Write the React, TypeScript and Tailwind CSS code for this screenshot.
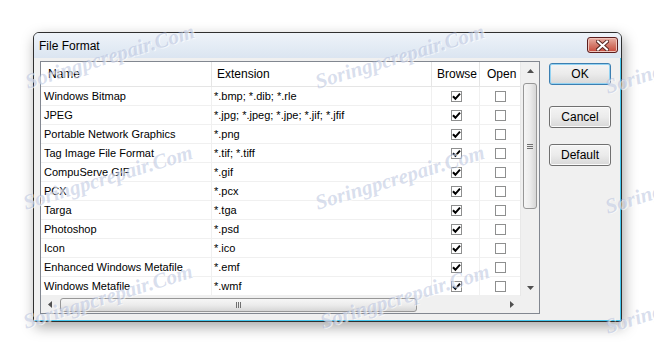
import React from 'react';

const rows: [string, string][] = [
  ['Windows Bitmap', '*.bmp; *.dib; *.rle'],
  ['JPEG', '*.jpg; *.jpeg; *.jpe; *.jif; *.jfif'],
  ['Portable Network Graphics', '*.png'],
  ['Tag Image File Format', '*.tif; *.tiff'],
  ['CompuServe GIF', '*.gif'],
  ['PCX', '*.pcx'],
  ['Targa', '*.tga'],
  ['Photoshop', '*.psd'],
  ['Icon', '*.ico'],
  ['Enhanced Windows Metafile', '*.emf'],
  ['Windows Metafile', '*.wmf'],
];

// watermark centres, drawn over the whole shot
const marks = [
  { x: 'left-[110px] top-[57px]' },
  { x: 'left-[400px] top-[57px]' },
  { x: 'left-[690px] top-[62px]' },
  { x: 'left-[108px] top-[178px]' },
  { x: 'left-[400px] top-[178px]' },
  { x: 'left-[690px] top-[182px]' },
  { x: 'left-[108px] top-[297px]' },
  { x: 'left-[405px] top-[297px]' },
  { x: 'left-[690px] top-[302px]' },
];

function Box({ checked }: { checked: boolean }) {
  return (
    <span className="w-[11px] h-[11px] border border-[#8e8f8f] bg-white flex items-center justify-center">
      {checked && (
        <svg width="9" height="9" viewBox="0 0 9 9">
          <path d="M1 4.2 L3.4 6.8 L8 1.6" fill="none" stroke="#000" strokeWidth="2" />
        </svg>
      )}
    </span>
  );
}

function Arrow({ dir }: { dir: 'up' | 'down' | 'left' | 'right' }) {
  const d = {
    up: 'M0 4 L3.5 0 L7 4 Z',
    down: 'M0 0 L7 0 L3.5 4 Z',
    left: 'M4 0 L4 7 L0 3.5 Z',
    right: 'M0 0 L4 3.5 L0 7 Z',
  }[dir];
  const vert = dir === 'up' || dir === 'down';
  return (
    <svg width={vert ? 7 : 4} height={vert ? 4 : 7} viewBox={vert ? '0 0 7 4' : '0 0 4 7'}>
      <path d={d} fill="#505050" />
    </svg>
  );
}

function Btn({ label, def, className }: { label: string; def?: boolean; className?: string }) {
  return (
    <div
      className={
        'h-[22px] w-[62px] rounded-[3px] flex items-center justify-center text-[12px] text-black bg-gradient-to-b from-[#f4f4f4] via-[#ebebeb] to-[#d8d8d8] ' +
        (def
          ? 'border border-[#3c7fb1] shadow-[inset_0_0_0_1px_#93d2f2] '
          : 'border border-[#707070] shadow-[inset_0_0_0_1px_#fbfbfb] ') +
        (className ?? '')
      }
    >
      {label}
    </div>
  );
}

export default function App() {
  return (
    <div className="w-[654px] h-[354px] bg-white pt-[32px] pl-[33px] relative overflow-hidden font-['Liberation_Sans',Arial,sans-serif] text-black">
      <div className="w-[589px] h-[290px] flex flex-col border border-[#2f2f2f] rounded-t-[6px] rounded-b-[1px] bg-[#dfe8f3] shadow-[2px_5px_14px_rgba(0,0,0,0.35)] overflow-hidden">
        {/* title bar */}
        <div className="h-[25px] flex justify-between bg-gradient-to-b from-[#eef3f9] to-[#dbe5f1]">
          <span className="pl-[5px] pt-[5px] text-[12px] leading-[16px]">File Format</span>
          <div className="mt-[4px] mr-[3px] w-[31px] h-[16px] rounded-[3px] border border-[#5c1e1e] bg-gradient-to-b from-[#e8b0a6] via-[#d47b6c] to-[#c7483a] flex items-center justify-center shadow-[inset_0_0_0_1px_#f0c4bb]">
            <svg width="13" height="11" viewBox="0 0 13 11">
              <path d="M2 1.5 L11 9.5 M11 1.5 L2 9.5" stroke="#5a2a25" strokeWidth="4" strokeLinecap="square" />
              <path d="M2 1.5 L11 9.5 M11 1.5 L2 9.5" stroke="#ffffff" strokeWidth="2" strokeLinecap="square" />
            </svg>
          </div>
        </div>

        {/* client */}
        <div className="flex-1 flex pl-[6px] pt-[3px] pb-[6px] pr-[8px] gap-[9px] bg-[#f0f0f0] border-r border-b border-[#43c6ee]">
          <div className="w-[500px] h-[253px] border border-[#828790] bg-white flex flex-col text-[11px]">
            <div className="flex flex-1 min-h-0">
              <div className="w-[479px] flex flex-col">
                <div className="h-[25px] flex border-b border-[#e5e5e5] text-[12px]">
                  <div className="w-[171px] pl-[7px] flex items-center border-r border-[#e5e5e5]">Name</div>
                  <div className="w-[220px] pl-[5px] flex items-center border-r border-[#e5e5e5]">Extension</div>
                  <div className="w-[48px] pl-[5px] flex items-center border-r border-[#e5e5e5]">Browse</div>
                  <div className="w-[40px] pl-[7px] flex items-center">Open</div>
                </div>
                {rows.map(([n, e]) => (
                  <div key={n} className="h-[19px] flex border-b border-[#f0f0f0]">
                    <div className="w-[171px] pl-[3px] flex items-center border-r border-[#f0f0f0] whitespace-nowrap">{n}</div>
                    <div className="w-[220px] pl-[2px] flex items-center border-r border-[#f0f0f0] whitespace-nowrap">{e}</div>
                    <div className="w-[48px] flex items-center justify-center border-r border-[#f0f0f0] pl-[2px]">
                      <Box checked />
                    </div>
                    <div className="w-[40px] flex items-center justify-center">
                      <Box checked={false} />
                    </div>
                  </div>
                ))}
              </div>
              {/* vertical scrollbar */}
              <div className="w-[19px] flex flex-col bg-[#f0f0f0] border-l border-[#e8e8e8]">
                <div className="h-[17px] flex items-center justify-center pt-[1px]">
                  <Arrow dir="up" />
                </div>
                <div className="flex-1 px-[2px] pt-[4px]">
                  <div className="h-[126px] rounded-[3px] border border-[#979797] bg-gradient-to-r from-[#f6f6f6] via-[#ececec] to-[#d6d6d6] flex items-center justify-center">
                    <div className="flex flex-col gap-[1px]">
                      <span className="w-[6px] h-[1px] bg-[#707070]" />
                      <span className="w-[6px] h-[1px] bg-[#707070]" />
                      <span className="w-[6px] h-[1px] bg-[#707070]" />
                    </div>
                  </div>
                </div>
                <div className="h-[17px] flex items-center justify-center">
                  <Arrow dir="down" />
                </div>
              </div>
            </div>
            {/* horizontal scrollbar */}
            <div className="h-[17px] flex bg-[#f0f0f0]">
              <div className="w-[479px] flex items-center">
                <div className="w-[17px] flex justify-center">
                  <Arrow dir="left" />
                </div>
                <div className="ml-[2px] w-[357px] h-[14px] rounded-[3px] border border-[#979797] bg-gradient-to-b from-[#f6f6f6] via-[#ececec] to-[#d6d6d6] flex items-center justify-center gap-[1px]">
                  <span className="w-[1px] h-[6px] bg-[#707070]" />
                  <span className="w-[1px] h-[6px] bg-[#707070]" />
                  <span className="w-[1px] h-[6px] bg-[#707070]" />
                </div>
                <div className="flex-1" />
                <div className="w-[17px] flex justify-center">
                  <Arrow dir="right" />
                </div>
              </div>
              <div className="flex-1 bg-[#f0f0f0]" />
            </div>
          </div>

          <div className="flex flex-col">
            <Btn label="OK" def className="mt-[2px]" />
            <Btn label="Cancel" className="mt-[21px]" />
            <Btn label="Default" className="mt-[16px]" />
          </div>
        </div>
      </div>

      {marks.map((m, i) => (
        <span
          key={i}
          className={
            'absolute pointer-events-none -translate-x-1/2 -translate-y-1/2 rotate-[-17deg] whitespace-nowrap italic font-bold text-[21px] font-["Liberation_Serif",serif] text-[rgba(170,182,215,0.45)] [text-shadow:1px_1px_0_rgba(255,255,255,0.6)] ' +
            m.x
          }
        >
          Soringpcrepair.Com
        </span>
      ))}
    </div>
  );
}
